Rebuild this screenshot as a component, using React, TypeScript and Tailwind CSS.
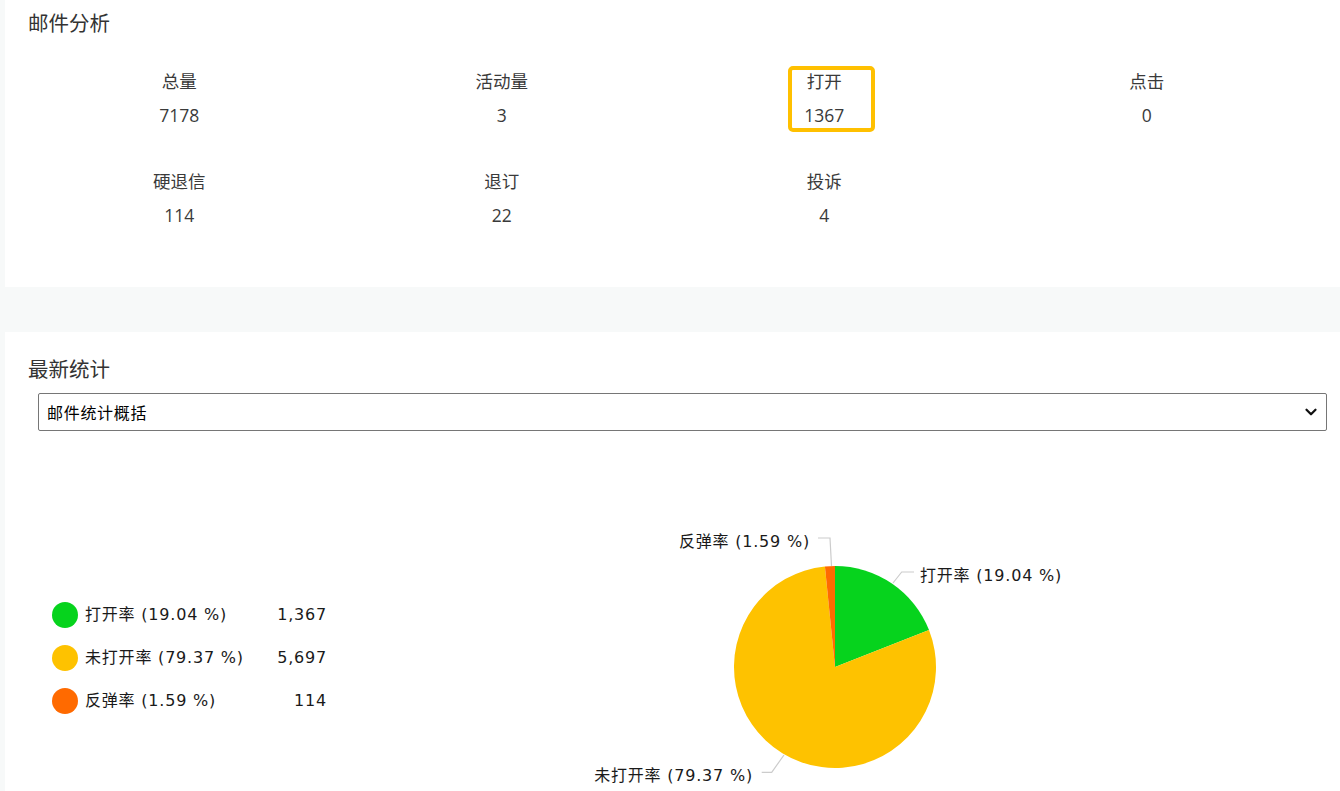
import React from "react";
import { ChevronDown } from "lucide-react";

const stats1 = [
  { label: "总量", value: "7178" },
  { label: "活动量", value: "3" },
  { label: "打开", value: "1367" },
  { label: "点击", value: "0" },
];
const stats2 = [
  { label: "硬退信", value: "114" },
  { label: "退订", value: "22" },
  { label: "投诉", value: "4" },
];

const slices = [
  { pct: 19.04, color: "#06d31d" },
  { pct: 79.37, color: "#fec200" },
  { pct: 1.59, color: "#ff6a00" },
];

const legend = [
  { color: "#06d31d", label: "打开率 (19.04 %)", value: "1,367" },
  { color: "#fec200", label: "未打开率 (79.37 %)", value: "5,697" },
  { color: "#ff6a00", label: "反弹率 (1.59 %)", value: "114" },
];

const chartFont = '"DejaVu Sans", Verdana, "Noto Sans CJK SC", sans-serif';

function Pie() {
  const cx = 275;
  const cy = 236;
  const r = 101;
  let acc = 0;
  const paths = slices.map((s, i) => {
    const a0 = (acc / 100) * Math.PI * 2;
    acc += s.pct;
    const a1 = (acc / 100) * Math.PI * 2;
    const x0 = cx + r * Math.sin(a0);
    const y0 = cy - r * Math.cos(a0);
    const x1 = cx + r * Math.sin(a1);
    const y1 = cy - r * Math.cos(a1);
    const large = a1 - a0 > Math.PI ? 1 : 0;
    const d = `M${cx},${cy} L${x0},${y0} A${r},${r} 0 ${large} 1 ${x1},${y1} Z`;
    return <path key={i} d={d} fill={s.color} />;
  });
  const font = { fontFamily: chartFont, fontSize: 16, letterSpacing: 0.8 };
  return (
    <svg width="540" height="360" viewBox="0 0 540 360">
      {paths}
      <polyline points="258,107 270,107 271.5,135" fill="none" stroke="#cccccc" strokeWidth="1.2" />
      <polyline points="333,152 341.7,141 354,141" fill="none" stroke="#cccccc" strokeWidth="1.2" />
      <polyline points="224,324 211.7,341.3 201.7,341.3" fill="none" stroke="#cccccc" strokeWidth="1.2" />
      <text x="250" y="116" textAnchor="end" fill="#1a1a1a" style={font}>反弹率 (1.59 %)</text>
      <text x="360" y="150" textAnchor="start" fill="#1a1a1a" style={font}>打开率 (19.04 %)</text>
      <text x="193" y="350" textAnchor="end" fill="#1a1a1a" style={font}>未打开率 (79.37 %)</text>
    </svg>
  );
}

function StatItem({ label, value }: { label: string; value: string }) {
  return (
    <div className="flex flex-col items-center">
      <div className="h-[34px] leading-[34px]">{label}</div>
      <div className="h-[34px] leading-[34px]">{value}</div>
    </div>
  );
}

export default function App() {
  return (
    <div
      className="w-[1340px] h-[791px] overflow-hidden bg-[#f7f9f9] pl-[5px] text-[#333333]"
      style={{ fontFamily: '"Open Sans", "Noto Sans CJK SC", sans-serif' }}
    >
      {/* Card 1 */}
      <div className="relative bg-white h-[287px] pl-[23px] pt-[8px]">
        <div className="text-[20.5px] leading-[28px] text-[#333]" style={{ fontFamily: '"Noto Sans CJK SC", sans-serif' }}>
          邮件分析
        </div>
        <div className="ml-[-10px] mt-[28px] w-[1290px] text-[17.5px] text-[#3a3a3a]">
          <div className="grid grid-cols-4 h-[100px]">
            {stats1.map((s) => (
              <StatItem key={s.label} {...s} />
            ))}
          </div>
          <div className="grid grid-cols-4 h-[100px]">
            {stats2.map((s) => (
              <StatItem key={s.label} {...s} />
            ))}
          </div>
        </div>
        <div className="absolute left-[783px] top-[66px] w-[87px] h-[66px] border-4 border-[#ffc000] rounded-[5px]" />
      </div>

      {/* Card 2 */}
      <div className="bg-white mt-[45px] h-[459px] pt-[22px]">
        <div className="pl-[23px] text-[20.5px] leading-[28px] text-[#333]" style={{ fontFamily: '"Noto Sans CJK SC", sans-serif' }}>
          最新统计
        </div>
        <div className="ml-[33px] mr-[13px] mt-[11px] h-[38px] border border-[#767676] rounded-[2px] flex items-center justify-between pl-[8px] pr-[6px]">
          <span className="text-[16px] text-black tracking-[0.7px]" style={{ fontFamily: '"Noto Sans CJK SC", sans-serif' }}>
            邮件统计概括
          </span>
          <ChevronDown size={18} strokeWidth={3} color="#111" />
        </div>
        <div className="flex h-[360px]">
          <div className="w-[555px] pl-[47px] pt-[162px]" style={{ fontFamily: chartFont }}>
            {legend.map((l) => (
              <div key={l.label} className="flex items-center h-[43px] text-[16px] tracking-[0.8px] text-[#1a1a1a]">
                <div className="w-[26px] h-[26px] rounded-full" style={{ backgroundColor: l.color }} />
                <div className="ml-[7px] w-[175px]">{l.label}</div>
                <div className="w-[67px] text-right">{l.value}</div>
              </div>
            ))}
          </div>
          <Pie />
        </div>
      </div>
    </div>
  );
}
